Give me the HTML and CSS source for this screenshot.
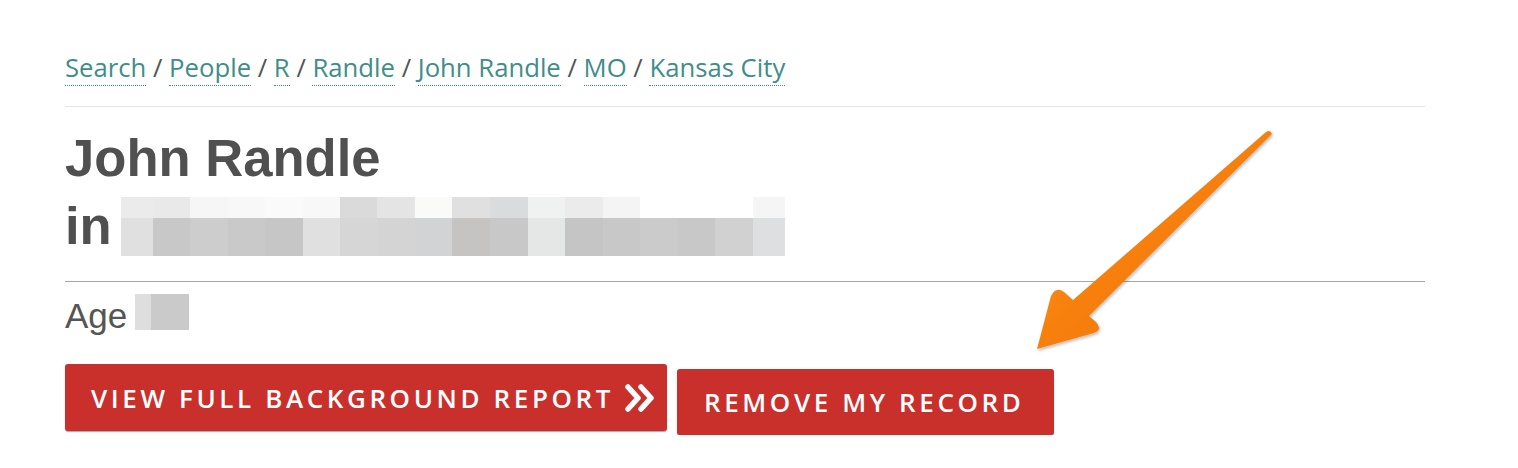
FILE: index.html
```html
<!DOCTYPE html>
<html lang="en">
<head>
  <meta charset="UTF-8">
  <meta name="viewport" content="width=device-width, initial-scale=1.0">
  <title>John Randle - Kansas City, MO</title>
  <link rel="stylesheet" href="styles.css">
</head>
<body>
  <div class="page">
    <nav class="crumbs">
      <a href="#">Search</a> / <a href="#">People</a> / <a href="#">R</a> / <a href="#">Randle</a> / <a href="#">John Randle</a> / <a href="#">MO</a> / <a href="#">Kansas City</a>
    </nav>
    <hr class="rule-light">

    <h1 class="name">John Randle<br>in <span class="blur-loc"><span class="blur-top"></span><span class="blur-bottom"></span></span></h1>
    <hr class="rule">

    <p class="age">Age<span class="blur-age"></span></p>

    <div class="actions">
      <a href="#" class="btn btn-report">
        <span>VIEW FULL BACKGROUND REPORT</span>
        <svg class="chevrons" viewBox="0 0 30 28" width="30" height="28">
          <path d="M3 3 L13 14 L3 25 M16 3 L26 14 L16 25" fill="none" stroke="#fff" stroke-width="5.5" stroke-linecap="round" stroke-linejoin="round"/>
        </svg>
      </a>
      <a href="#" class="btn btn-remove">REMOVE MY RECORD</a>
    </div>
  </div>

  <!-- callout arrow pointing at the remove button -->
  <svg class="callout" viewBox="0 0 1518 468" width="1518" height="468">
    <defs>
      <linearGradient id="arrow-fill" x1="0" y1="0" x2="1" y2="1">
        <stop offset="0" stop-color="#ff9a2e"/>
        <stop offset="0.5" stop-color="#f77f0c"/>
        <stop offset="1" stop-color="#ef7400"/>
      </linearGradient>
      <filter id="arrow-shadow" x="-10%" y="-10%" width="130%" height="130%">
        <feDropShadow dx="1" dy="2" stdDeviation="1.5" flood-color="#000" flood-opacity="0.25"/>
      </filter>
    </defs>
    <path filter="url(#arrow-shadow)" fill="url(#arrow-fill)"
          d="M1266 132 Q1270 129 1272 134 L1089 316 L1096 322 Q1103 330 1094 333 L1037 349 L1051 296 Q1056 286 1064 292 L1073 300 Z"/>
  </svg>
</body>
</html>
```

FILE: styles.css
```css
body {
  margin: 0;
  background: #fff;
  font-family: "Liberation Sans", Arial, sans-serif;
  color: #555;
}
.page {
  position: relative;
  width: 1360px;
  margin-left: 65px;
  padding-top: 51px;
}
.crumbs {
  font-family: "Open Sans", "Noto Sans", sans-serif;
  font-size: 25.7px;
  line-height: 34px;
  color: #555;
}
.crumbs a {
  color: #3f8d8b;
  text-decoration: none;
  border-bottom: 1px dotted #3f8d8b;
}
.rule-light {
  margin: 21px 0 0;
  border: 0;
  border-top: 1px solid #e3e7ea;
}
.rule {
  margin: 21px 0 0;
  border: 0;
  border-top: 1px solid #a6a6a6;
}
.name {
  margin: 17px 0 0;
  font-size: 52.6px;
  line-height: 68px;
  font-weight: bold;
  color: #505050;
}
.blur-loc {
  display: inline-block;
  width: 664px;
  height: 59px;
  vertical-align: -12px;
  margin-left: -5px;
}
.blur-top, .blur-bottom {
  display: block;
}
.blur-top {
  height: 21px;
  background: linear-gradient(to right,
    #ebebeb 0 32px, #e9e9e9 32px 69px, #f6f6f6 69px 107px, #f8f8f8 107px 144px,
    #fafafa 144px 182px, #f8f8f8 182px 219px, #dadada 219px 256px, #e4e4e4 256px 294px,
    #fafaf9 294px 331px, #e0e0e0 331px 369px, #dadbdc 369px 407px, #f0f1f1 407px 444px,
    #ebebeb 444px 482px, #f4f4f4 482px 519px, #fff 519px 632px, #f5f5f5 632px 664px);
}
.blur-bottom {
  height: 38px;
  background: linear-gradient(to right,
    #e0e0e0 0 32px, #c8c8c8 32px 69px, #cdcdcd 69px 107px, #c9c9c9 107px 144px,
    #c6c6c6 144px 182px, #e0e0e0 182px 219px, #d6d6d6 219px 256px, #d4d4d4 256px 294px,
    #d2d3d4 294px 331px, #c6c4c2 331px 369px, #c8c8c8 369px 407px, #e5e6e6 407px 444px,
    #c4c5c4 444px 482px, #c8c8c8 482px 519px, #cbcbcb 519px 557px, #c8c8c8 557px 594px,
    #d1d1d1 594px 632px, #dedfe0 632px 664px);
}
.age {
  margin: 12px 0 0;
  font-size: 35px;
  line-height: 40px;
  color: #555;
}
.blur-age {
  display: inline-block;
  width: 54px;
  height: 36px;
  margin-left: 8px;
  vertical-align: -2px;
  background: linear-gradient(to right, #dedede 0 16px, #cacaca 16px 54px);
}
.actions {
  display: flex;
  align-items: flex-start;
  gap: 10px;
  margin-top: 28px;
}
.btn {
  display: flex;
  align-items: center;
  height: 67px;
  box-sizing: border-box;
  background: #c9302c;
  color: #fff;
  text-decoration: none;
  border-radius: 3px;
  box-shadow: 0 1px 1px rgba(0, 0, 0, 0.35);
  font-family: "Open Sans", "Noto Sans", sans-serif;
  font-weight: 600;
  font-size: 26px;
  letter-spacing: 3.6px;
}
.btn-report {
  width: 602px;
  padding: 0 10px 0 26px;
  gap: 11px;
}
.btn-remove {
  width: 377px;
  height: 66px;
  margin-top: 5px;
  padding-left: 27px;
}
.chevrons {
  display: block;
}
.callout {
  position: absolute;
  top: 0;
  left: 0;
  pointer-events: none;
}
```
